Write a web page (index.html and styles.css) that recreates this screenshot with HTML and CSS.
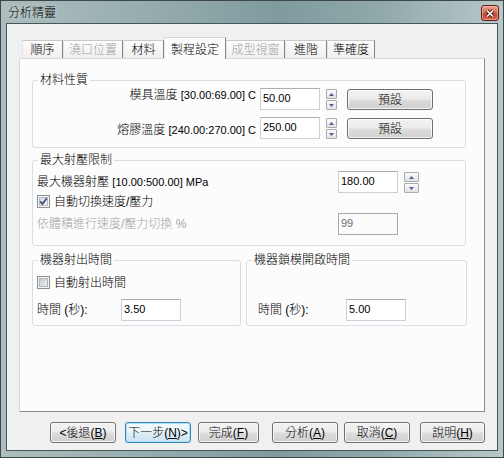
FILE: index.html
```html
<!DOCTYPE html>
<html lang="zh-Hant">
<head>
<meta charset="utf-8">
<title>分析精靈</title>
<link rel="stylesheet" href="styles.css">
</head>
<body>
<div class="window">
  <div class="titlebar">
    <span class="title">分析精靈</span>
    <span class="close">
      <svg width="10" height="9" viewBox="0 0 10 9"><path d="M2 1.5 L8 7.5 M8 1.5 L2 7.5" stroke="#4a1d16" stroke-width="3.4"/><path d="M2 1.5 L8 7.5 M8 1.5 L2 7.5" stroke="#fff" stroke-width="1.6"/></svg>
    </span>
  </div>
  <div class="client">
    <div class="tabs">
      <div class="tab t1">順序</div>
      <div class="tab t2 off">澆口位置</div>
      <div class="tab t3">材料</div>
      <div class="tab t4 active">製程設定</div>
      <div class="tab t5 off">成型視窗</div>
      <div class="tab t6">進階</div>
      <div class="tab t7">準確度</div>
    </div>
    <div class="panel">
      <fieldset class="group g1">
        <legend>材料性質</legend>
        <div class="row">
          <span class="lbl-r">模具溫度 <span class="lat">[30.00:69.00] C</span></span>
          <input class="field" type="text" value="50.00">
          <span class="spin">
            <span class="sb"><svg width="5" height="3" viewBox="0 0 5 3"><path d="M0 3L2.5 0L5 3Z" fill="#4d6392"/></svg></span>
            <span class="sb"><svg width="5" height="3" viewBox="0 0 5 3"><path d="M0 0L2.5 3L5 0Z" fill="#4d6392"/></svg></span>
          </span>
          <span class="btn preset">預設</span>
        </div>
        <div class="row r2">
          <span class="lbl-r low">熔膠溫度 <span class="lat">[240.00:270.00] C</span></span>
          <input class="field" type="text" value="250.00">
          <span class="spin">
            <span class="sb"><svg width="5" height="3" viewBox="0 0 5 3"><path d="M0 3L2.5 0L5 3Z" fill="#4d6392"/></svg></span>
            <span class="sb"><svg width="5" height="3" viewBox="0 0 5 3"><path d="M0 0L2.5 3L5 0Z" fill="#4d6392"/></svg></span>
          </span>
          <span class="btn preset">預設</span>
        </div>
      </fieldset>

      <fieldset class="group g2">
        <legend>最大射壓限制</legend>
        <div class="row ra">
          <span class="lbl-l">最大機器射壓 <span class="lat">[10.00:500.00] MPa</span></span>
          <input class="field" type="text" value="180.00">
          <span class="spin wide">
            <span class="sb"><svg width="5" height="3" viewBox="0 0 5 3"><path d="M0 3L2.5 0L5 3Z" fill="#4d6392"/></svg></span>
            <span class="sb"><svg width="5" height="3" viewBox="0 0 5 3"><path d="M0 0L2.5 3L5 0Z" fill="#4d6392"/></svg></span>
          </span>
        </div>
        <div class="chkrow rb">
          <span class="chk">
            <svg width="13" height="13" viewBox="0 0 13 13">
              <defs><linearGradient id="cg1" x1="0" y1="0" x2="1" y2="1"><stop offset="0" stop-color="#cfd3d8"/><stop offset="1" stop-color="#f6f6f6"/></linearGradient></defs>
              <rect x="0.5" y="0.5" width="12" height="12" fill="#f5f5f5" stroke="#8e8f8f"/>
              <rect x="2.5" y="2.5" width="8" height="8" fill="url(#cg1)" stroke="#b9bdc3"/>
              <path d="M3.2 6.4L5.4 9L9.8 3.2" fill="none" stroke="#3f5383" stroke-width="1.8"/>
            </svg>
          </span>
          <span>自動切換速度/壓力</span>
        </div>
        <div class="row rc">
          <span class="lbl-l gray">依體積進行速度/壓力切換 %</span>
          <input class="field dis" type="text" value="99" disabled>
        </div>
      </fieldset>

      <div class="pair">
        <fieldset class="group g3">
          <legend>機器射出時間</legend>
          <div class="chkrow">
            <span class="chk">
              <svg width="13" height="13" viewBox="0 0 13 13">
                <defs><linearGradient id="cg2" x1="0" y1="0" x2="1" y2="1"><stop offset="0" stop-color="#c4c7cc"/><stop offset="1" stop-color="#f2f2f2"/></linearGradient></defs>
                <rect x="0.5" y="0.5" width="12" height="12" fill="#f5f5f5" stroke="#8e8f8f"/>
                <rect x="2.5" y="2.5" width="8" height="8" fill="url(#cg2)" stroke="#b0b4ba"/>
              </svg>
            </span>
            <span>自動射出時間</span>
          </div>
          <div class="row trow">
            <span class="tl">時間 (秒):</span>
            <input class="field" type="text" value="3.50">
          </div>
        </fieldset>
        <fieldset class="group g4">
          <legend>機器鎖模開啟時間</legend>
          <div class="spacer"></div>
          <div class="row trow">
            <span class="tl">時間 (秒):</span>
            <input class="field" type="text" value="5.00">
          </div>
        </fieldset>
      </div>
    </div>

    <div class="actions">
      <span class="btn b1">&lt;後退(<u>B</u>)</span>
      <span class="btn b2 focus">下一步(<u>N</u>)&gt;</span>
      <span class="btn b3">完成(<u>F</u>)</span>
      <span class="btn b4">分析(<u>A</u>)</span>
      <span class="btn b5">取消(<u>C</u>)</span>
      <span class="btn b6">說明(<u>H</u>)</span>
    </div>
  </div>
</div>
</body>
</html>
```

FILE: styles.css
```css
* { box-sizing: border-box; }
html, body { margin: 0; padding: 0; }
body {
  width: 504px;
  height: 458px;
  overflow: hidden;
  background: #ffffff;
  font-family: "Liberation Sans", "Noto Sans CJK TC", sans-serif;
  font-size: 12px;
  font-weight: 300;
  line-height: 14px;
  color: #000;
}

.window {
  width: 504px;
  height: 458px;
  border: 1px solid #3d4849;
  padding: 0 5px 6px 5px;
  display: flex;
  flex-direction: column;
  background: linear-gradient(to right, #aebdbe 0%, #95acae 30%, #7f9b9e 55%, #8fa8aa 75%, #b8c8c9 100%);
}

.titlebar {
  height: 22px;
  display: flex;
  justify-content: space-between;
  align-items: flex-start;
  padding-left: 2px;
}
.title {
  margin-top: 5px;
  font-size: 12px;
  line-height: 14px;
  color: #000;
  text-shadow: 0 0 5px rgba(255,255,255,0.6);
}
.close {
  margin-top: 4px;
  margin-right: -1px;
  width: 18px;
  height: 16px;
  border: 1px solid #5a2119;
  border-radius: 3px;
  background: linear-gradient(#eaa08f 0%, #d86c55 45%, #c4442c 55%, #d2634a 100%);
  box-shadow: inset 0 0 0 1px rgba(255,210,200,0.5);
  display: flex;
  align-items: center;
  justify-content: center;
}

.client {
  flex: 1;
  border: 1px solid #45575a;
  background: #f0f0f0;
  padding: 13px 0 0 12px;
  display: flex;
  flex-direction: column;
}

/* tabs */
.tabs {
  display: flex;
  align-items: flex-end;
  height: 21px;
  margin-left: 3px;
}
.tab {
  height: 18px;
  display: flex;
  align-items: center;
  justify-content: center;
  background: linear-gradient(#fdfdfd, #efefef);
  border-top: 1px solid #c9c9c9;
  border-left: 1px solid #e6e6e6;
  border-right: 1px solid #858585;
  white-space: nowrap;
}
.tab.off { color: #a0a0a0; }
.t1 { width: 41px; }
.t2 { width: 60px; }
.t3 { width: 41px; }
.t4 { width: 62px; }
.t5 { width: 59px; }
.t6 { width: 42px; }
.t7 { width: 48px; }
.tab.active {
  height: 22px;
  margin-bottom: -1px;
  padding-top: 3px;
  background: #fcfcfc;
  border-top-color: #d4d4d4;
  position: relative;
  z-index: 1;
}

.panel {
  width: 466px;
  height: 354px;
  background: #fcfcfc;
  border: 1px solid;
  border-color: #d9d9d9 #898c95 #898c95 #d9d9d9;
  padding: 14px 0 0 12px;
}

/* group boxes */
.group {
  margin: 0;
  min-width: 0;
  border: 1px solid #d5dfe5;
  border-radius: 3px;
  padding: 1px 0 8px 4px;
}
.group legend {
  padding: 0 2px;
  margin-left: 1px;
  line-height: 14px;
}
.g1 { width: 434px; }
.g2 { width: 434px; margin-top: 5px; padding: 4px 0 10px 4px; }

.row {
  display: flex;
  align-items: flex-start;
  height: 22px;
}
.r2 { margin-top: 7px; }
.lbl-r {
  width: 219px;
  text-align: right;
  white-space: nowrap;
}
.lbl-r.low { margin-top: 6px; }
.lat { font-size: 11px; }

.field {
  width: 60px;
  height: 22px;
  margin: 0 0 0 4px;
  padding: 2px 2px 4px 2px;
  border: 1px solid #ccd1d8;
  border-top-color: #abadb3;
  border-radius: 0;
  background: #fff;
  font-family: "Liberation Sans", sans-serif;
  font-size: 11px;
  line-height: 14px;
  color: #000;
  outline: none;
}
.field.dis {
  border-color: #a8a8a8;
  background: #fcfcfc;
  color: #6d6d6d;
}

.spin {
  margin: 1px 0 0 6px;
  width: 11px;
  display: flex;
  flex-direction: column;
  gap: 1px;
}
.spin.wide { width: 15px; }
.sb {
  height: 10px;
  border: 1px solid #a9abae;
  border-radius: 1px;
  background: linear-gradient(#fbfbfb, #e3e3e3);
  display: flex;
  align-items: center;
  justify-content: center;
}
.sb svg { display: block; }

.btn {
  height: 21px;
  border: 1px solid #707070;
  border-radius: 3px;
  background: linear-gradient(#f3f3f3 0%, #ebebeb 48%, #dddddd 52%, #cfcfcf 100%);
  box-shadow: inset 0 0 0 1px rgba(255,255,255,0.75);
  display: flex;
  align-items: center;
  justify-content: center;
  white-space: nowrap;
}
.btn u { text-decoration: underline; }
.preset {
  width: 86px;
  margin: 1px 0 0 10px;
}

/* group 2 */
.ra { align-items: center; }
.lbl-l {
  width: 301px;
  white-space: nowrap;
}
.ra .field, .rc .field { margin-left: 0; }
.gray { color: #a3a3a3; }
.chkrow {
  display: flex;
  align-items: center;
  height: 13px;
  gap: 4px;
}
.rb { margin-top: 2px; }
.rc { margin-top: 5px; align-items: center; }
.chk { width: 13px; height: 13px; display: block; }
.chk svg { display: block; }

/* groups 3, 4 */
.pair {
  display: flex;
  gap: 5px;
  margin-top: 7px;
}
.g3 { width: 209px; padding: 9px 0 4px 4px; }
.g4 { width: 221px; padding: 9px 0 4px 4px; }
.spacer { height: 13px; }
.trow { margin-top: 10px; align-items: center; }
.trow .field { margin-left: 0; }
.g3 .tl { width: 84px; }
.g4 .trow { padding-left: 7px; }
.g4 .tl { width: 88px; }
.tl { white-space: nowrap; }

/* bottom buttons */
.actions {
  display: flex;
  margin-top: 10px;
  padding-left: 31px;
}
.b1 { width: 66px; }
.b2 { width: 66px; margin-left: 9px; }
.b3 { width: 61px; margin-left: 7px; }
.b4 { width: 66px; margin-left: 13px; }
.b5 { width: 66px; margin-left: 6px; }
.b6 { width: 65px; margin-left: 10px; }
.btn.focus {
  border-color: #3c7fb1;
  background: linear-gradient(#f4fafd 0%, #eaf5fb 48%, #dcedf6 52%, #cde4f1 100%);
  box-shadow: inset 0 0 0 1px #a8e2f8;
}
```
